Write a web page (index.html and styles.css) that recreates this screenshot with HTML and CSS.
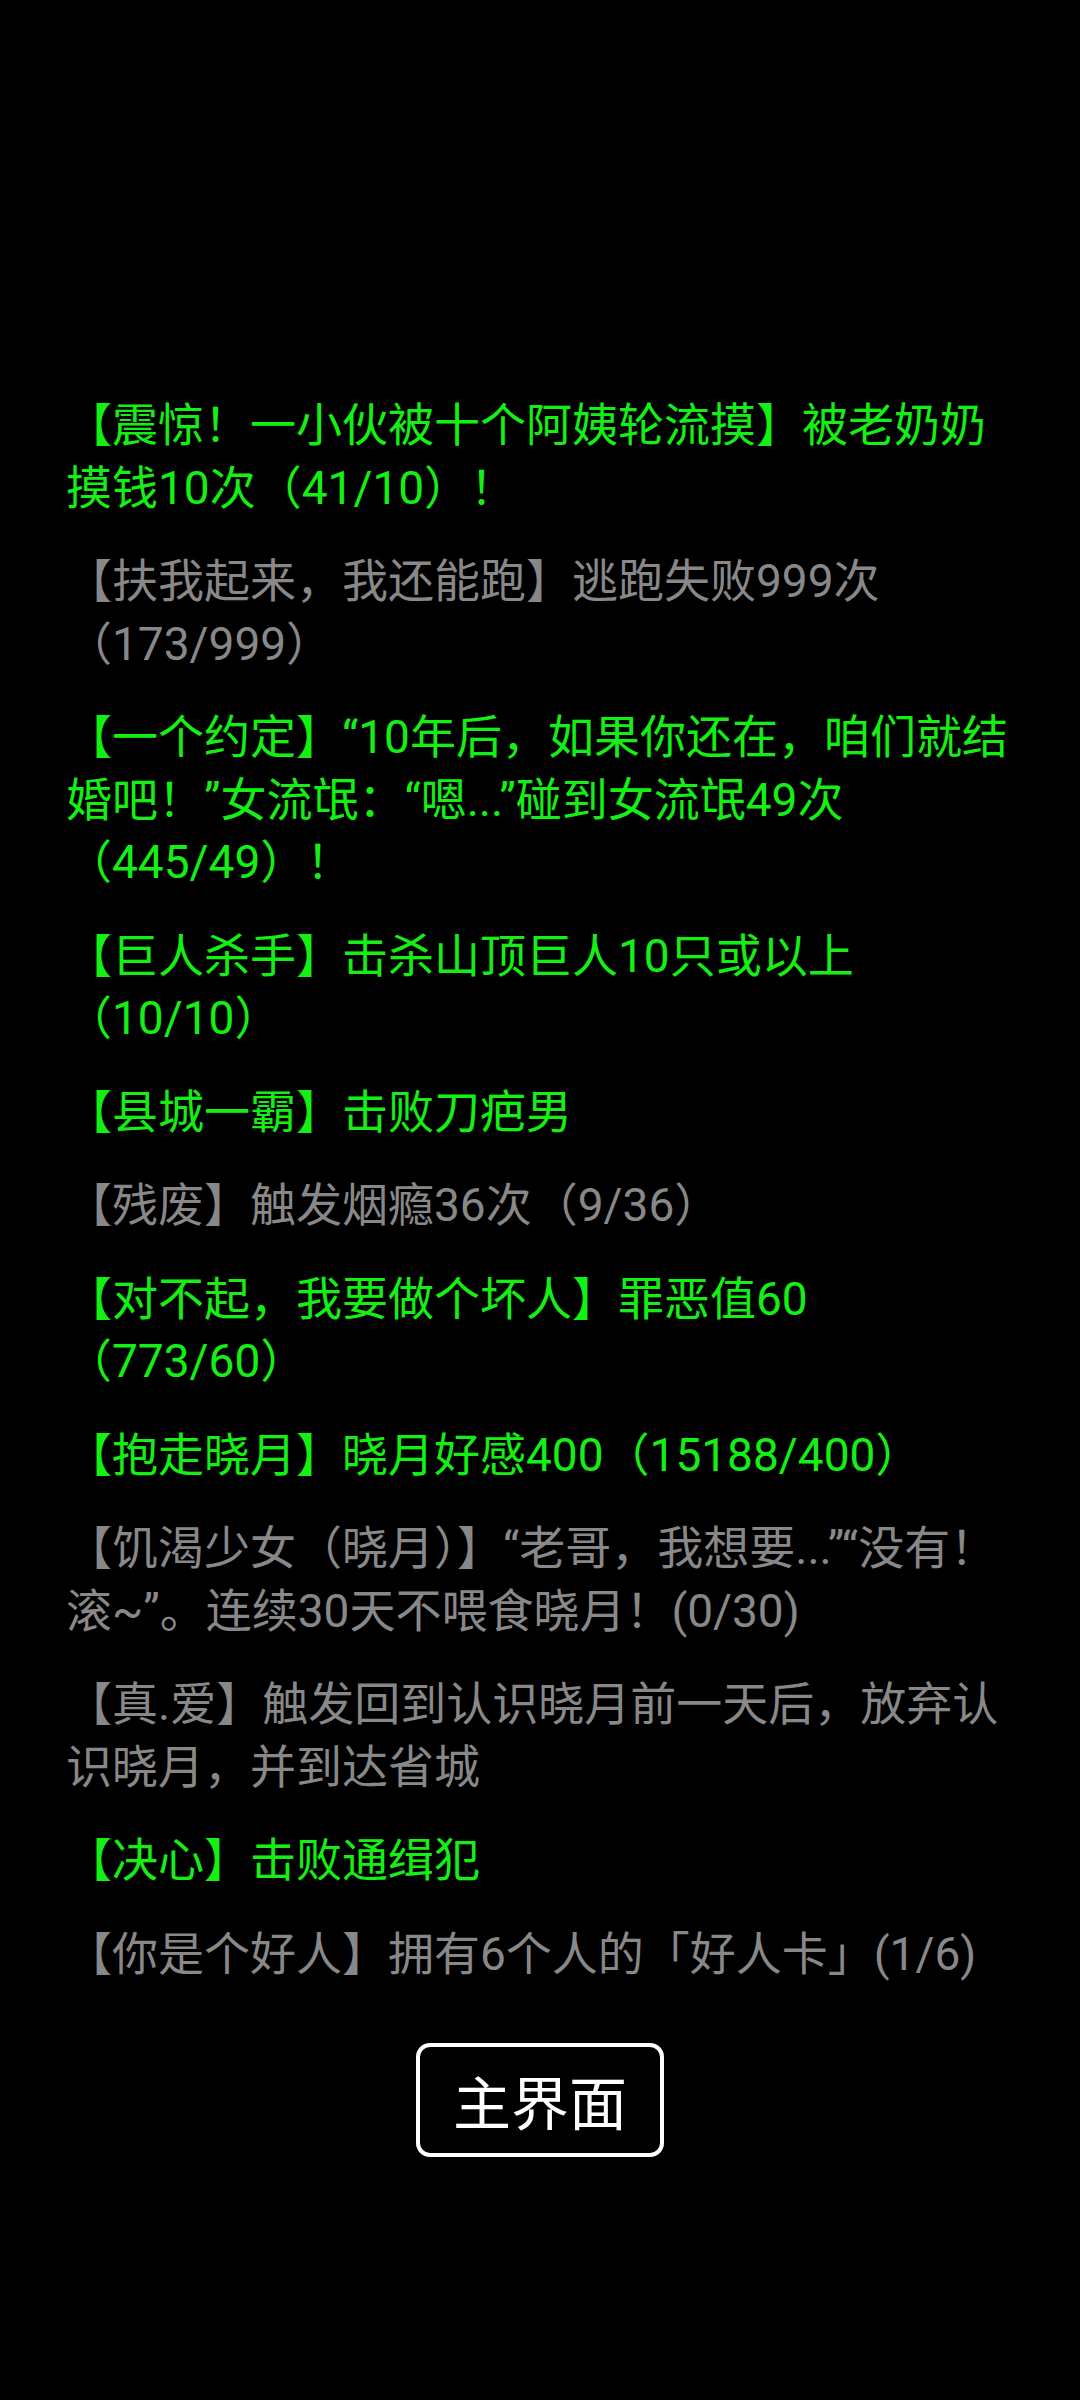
FILE: index.html
```html
<!DOCTYPE html>
<html lang="zh-CN">
<head>
<meta charset="utf-8">
<title>成就</title>
<link rel="stylesheet" href="styles.css">
</head>
<body>
<main class="screen">
  <ul class="achievements">
    <li class="item done">【震惊！一小伙被十个阿姨轮流摸】被老奶奶摸钱10次（41/10）！</li>
    <li class="item todo">【扶我起来，我还能跑】逃跑失败999次（173/999）</li>
    <li class="item done">【一个约定】“10年后，如果你还在，咱们就结婚吧！”女流氓：“嗯...”碰到女流氓49次（445/49）！</li>
    <li class="item done">【巨人杀手】击杀山顶巨人10只或以上（10/10）</li>
    <li class="item done">【县城一霸】击败刀疤男</li>
    <li class="item todo">【残废】触发烟瘾36次（9/36）</li>
    <li class="item done">【对不起，我要做个坏人】罪恶值60（773/60）</li>
    <li class="item done">【抱走晓月】晓月好感400（15188/400）</li>
    <li class="item todo">【饥渴少女（晓月）】“老哥，我想要...”“没有！滚~”。连续30天不喂食晓月！(0/30)</li>
    <li class="item todo">【真.爱】触发回到认识晓月前一天后，放弃认识晓月，并到达省城</li>
    <li class="item done">【决心】击败通缉犯</li>
    <li class="item todo">【你是个好人】拥有6个人的「好人卡」(1/6)</li>
  </ul>
  <div class="actions">
    <button class="main-btn" type="button">主界面</button>
  </div>
</main>
</body>
</html>
```

FILE: styles.css
```css
html, body {
  margin: 0;
  padding: 0;
  background: #000;
}

body {
  width: 1080px;
  min-height: 2400px;
  font-family: Roboto, "Noto Sans CJK SC", sans-serif;
}

.screen {
  padding: 394px 66px 0 66px;
  box-sizing: border-box;
}

.achievements {
  list-style: none;
  margin: 0;
  padding: 0;
  display: flex;
  flex-direction: column;
  gap: 31px;
}

.item {
  font-size: 46px;
  line-height: 62.5px;
  font-weight: 400;
}

.done {
  color: #14f014;
}

.todo {
  color: #888888;
}

.actions {
  display: flex;
  justify-content: center;
  margin-top: 58px;
}

.main-btn {
  width: 248px;
  height: 114px;
  box-sizing: border-box;
  border: 4px solid #fff;
  border-radius: 14px;
  background: #000;
  color: #fff;
  font-family: "Noto Sans CJK SC", sans-serif;
  font-size: 58px;
  line-height: 1;
  padding: 0;
  display: flex;
  align-items: center;
  justify-content: center;
}
```
